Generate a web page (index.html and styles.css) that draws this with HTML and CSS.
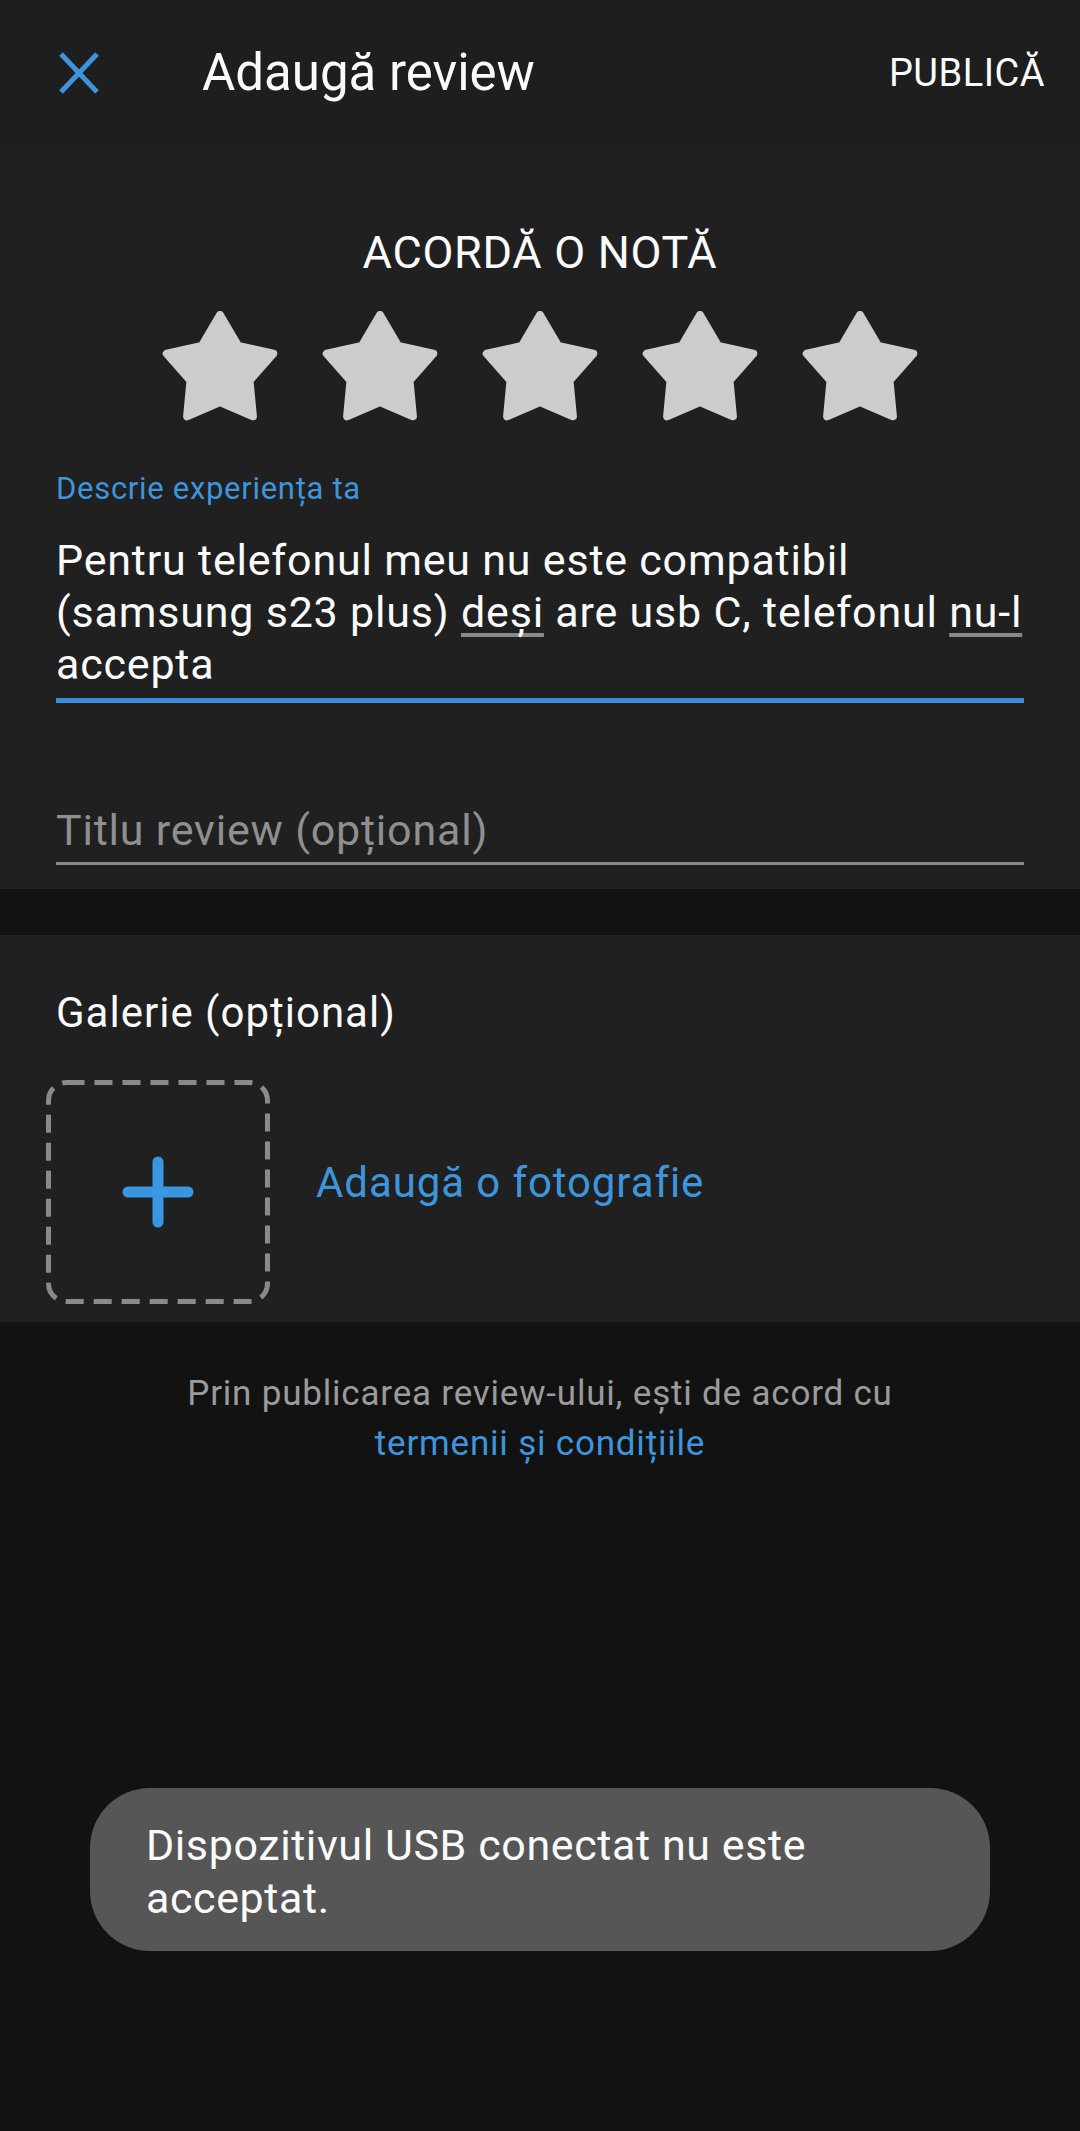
FILE: index.html
```html
<!DOCTYPE html>
<html lang="ro">
<head>
    <meta charset="UTF-8">
    <meta name="viewport" content="width=device-width, initial-scale=1.0">
    <title>Adaugă review</title>
    <link rel="stylesheet" href="styles.css">
</head>
<body>
    <header class="topbar">
        <svg class="close-icon" width="40" height="42" viewBox="0 0 40 42">
            <line x1="2" y1="2" x2="38" y2="40" stroke="#3d94dd" stroke-width="5"/>
            <line x1="38" y1="2" x2="2" y2="40" stroke="#3d94dd" stroke-width="5"/>
        </svg>
        <h1 class="topbar-title">Adaugă review</h1>
        <a class="publish">PUBLICĂ</a>
    </header>

    <section class="card rating">
        <h2 class="rating-title">ACORDĂ O NOTĂ</h2>
        <div class="stars">
            <svg class="star" viewBox="0 0 120 110"><polygon points="60,4 78.23,34.92 113.26,42.7 89.48,69.58 92.92,105.3 60,91 27.08,105.3 30.52,69.58 6.74,42.7 41.77,34.92"/></svg>
            <svg class="star" viewBox="0 0 120 110"><polygon points="60,4 78.23,34.92 113.26,42.7 89.48,69.58 92.92,105.3 60,91 27.08,105.3 30.52,69.58 6.74,42.7 41.77,34.92"/></svg>
            <svg class="star" viewBox="0 0 120 110"><polygon points="60,4 78.23,34.92 113.26,42.7 89.48,69.58 92.92,105.3 60,91 27.08,105.3 30.52,69.58 6.74,42.7 41.77,34.92"/></svg>
            <svg class="star" viewBox="0 0 120 110"><polygon points="60,4 78.23,34.92 113.26,42.7 89.48,69.58 92.92,105.3 60,91 27.08,105.3 30.52,69.58 6.74,42.7 41.77,34.92"/></svg>
            <svg class="star" viewBox="0 0 120 110"><polygon points="60,4 78.23,34.92 113.26,42.7 89.48,69.58 92.92,105.3 60,91 27.08,105.3 30.52,69.58 6.74,42.7 41.77,34.92"/></svg>
        </div>

        <div class="field">
            <label class="field-label">Descrie experiența ta</label>
            <div class="field-text active">Pentru telefonul meu nu este compatibil (samsung s23 plus) <span class="typo">deși</span> are usb C, telefonul <span class="typo">nu-l</span> accepta</div>
        </div>

        <div class="field">
            <div class="field-text placeholder">Titlu review (opțional)</div>
        </div>
    </section>

    <section class="card gallery">
        <h3 class="gallery-title">Galerie (opțional)</h3>
        <div class="gallery-row">
            <div class="photo-box">
                <svg width="224" height="224" viewBox="0 0 224 224">
                    <rect x="2.5" y="2.5" width="219" height="219" rx="18" fill="none" stroke="#8a8a8a" stroke-width="5" stroke-dasharray="18 10"/>
                    <line x1="112" y1="82" x2="112" y2="142" stroke="#3b96e2" stroke-width="11" stroke-linecap="round"/>
                    <line x1="82" y1="112" x2="142" y2="112" stroke="#3b96e2" stroke-width="11" stroke-linecap="round"/>
                </svg>
            </div>
            <a class="add-photo">Adaugă o fotografie</a>
        </div>
    </section>

    <p class="terms">Prin publicarea review-ului, ești de acord cu<br><a>termenii și condițiile</a></p>

    <div class="toast">Dispozitivul USB conectat nu este<br>acceptat.</div>
</body>
</html>
```

FILE: styles.css
```css
body {
    font-family: Roboto, "Noto Sans", sans-serif;
    background-color: #121212;
    color: #fafafa;
    margin: 0;
    width: 1080px;
    min-height: 2131px;
    position: relative;
}

a {
    text-decoration: none;
}

.topbar {
    height: 145px;
    background-color: #1e1e1e;
    display: flex;
    align-items: center;
}

.close-icon {
    margin-left: 59px;
}

.topbar-title {
    margin: 0 0 0 103px;
    font-size: 51px;
    font-weight: 400;
}

.publish {
    margin-left: auto;
    margin-right: 35px;
    font-size: 38px;
    letter-spacing: 0.5px;
    color: #fafafa;
}

.card {
    background-color: #202020;
}

.rating {
    padding: 80px 56px 24px;
    margin-bottom: 46px;
}

.rating-title {
    margin: 0;
    text-align: center;
    font-size: 45px;
    line-height: 56px;
    font-weight: 400;
    letter-spacing: 0.7px;
}

.stars {
    display: flex;
    justify-content: center;
    gap: 40px;
    margin-top: 30px;
}

.star {
    width: 120px;
    height: 110px;
    fill: #cccccc;
    stroke: #cccccc;
    stroke-width: 8;
    stroke-linejoin: round;
}

.field-label {
    display: block;
    margin-top: 48px;
    font-size: 31px;
    line-height: 40px;
    letter-spacing: 0.7px;
    color: #3e95dc;
}

.field-text {
    font-size: 43px;
    line-height: 52px;
    letter-spacing: 0.8px;
}

.field-text.active {
    margin-top: 25px;
    padding-bottom: 8px;
    border-bottom: 5px solid #3a8fd8;
}

.field-text.placeholder {
    margin-top: 101px;
    padding-bottom: 6px;
    border-bottom: 3px solid #8a8a8a;
    color: #8f8f8f;
}

.typo {
    text-decoration: underline;
    text-decoration-color: #8a8a8a;
    text-decoration-thickness: 4px;
    text-underline-offset: 6px;
    text-decoration-skip-ink: none;
}

.gallery {
    padding: 53px 56px 18px 46px;
}

.gallery-title {
    margin: 0 0 0 10px;
    font-size: 42px;
    line-height: 50px;
    font-weight: 400;
    letter-spacing: 1px;
}

.gallery-row {
    display: flex;
    align-items: center;
    margin-top: 42px;
}

.photo-box {
    width: 224px;
    height: 224px;
}

.photo-box svg {
    display: block;
}

.add-photo {
    margin-left: 46px;
    margin-bottom: 20px;
    font-size: 42px;
    letter-spacing: 0.9px;
    color: #3e95dc;
}

.terms {
    margin: 0;
    padding-top: 47px;
    text-align: center;
    font-size: 35px;
    line-height: 50px;
    letter-spacing: 0.8px;
    color: #9b9b9b;
}

.terms a {
    color: #3e95dc;
}

.toast {
    position: absolute;
    top: 1788px;
    left: 90px;
    width: 900px;
    box-sizing: border-box;
    padding: 31px 40px 26px 56px;
    background-color: #565656;
    border-radius: 60px;
    font-size: 43px;
    line-height: 53px;
    letter-spacing: 0.6px;
}
```
